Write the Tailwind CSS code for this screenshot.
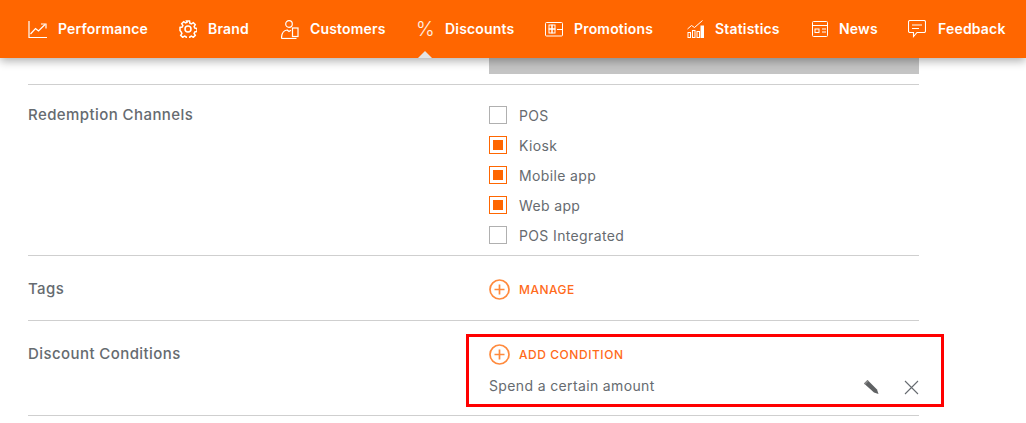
<!DOCTYPE html>
<html lang="en">
<head>
    <meta charset="UTF-8">
    <title>Discounts</title>
    <script src="https://cdn.jsdelivr.net/npm/@tailwindcss/browser@4"></script>
</head>
<body class="bg-white font-['Inter',sans-serif] text-[#666b70] overflow-hidden">
    <div class="relative w-[1026px] h-[423px] overflow-hidden">
      <nav class="relative z-10 h-[58px] bg-[#ff6600] shadow-[0_3px_9px_rgba(0,0,0,0.32)] flex items-center text-white text-[14px] font-semibold tracking-[0.18px]">
        <a class="absolute left-[28px] top-[18px] flex items-center gap-[11px]">
          <svg class="w-[19px] h-[17px]" viewBox="0 0 19 17" fill="none" stroke="white" stroke-width="1.200"><path d="M1 0v16.500h18"/><path d="M2.500 13l5-5.500 3 2.500 6.500-6.500"/><path d="M13 3h5v4.500"/></svg>
          <span class="leading-[22px]">Performance</span>
        </a>
        <a class="absolute left-[179px] top-[18px] flex items-center gap-[11px]">
          <svg class="w-[18px] h-[18px]" viewBox="0 0 18 18" fill="none" stroke="white" stroke-width="1.500"><circle cx="9" cy="9" r="3"/><path d="M7.500 1h3l.4 2.200 1.500.7 1.900-1.200 2 2-1.200 1.900.7 1.500 2.200.4v3l-2.200.4-.7 1.500 1.200 1.900-2 2-1.900-1.200-1.500.7-.4 2.200h-3l-.4-2.200-1.500-.7-1.900 1.200-2-2 1.200-1.900-.7-1.500L1 10.500v-3l2.200-.4.700-1.500L2.700 3.700l2-2 1.900 1.200 1.500-.7z"/></svg>
          <span class="leading-[22px]">Brand</span>
        </a>
        <a class="absolute left-[281px] top-[18px] flex items-center gap-[11px]">
          <svg class="w-[18px] h-[19px]" viewBox="0 0 18 19" fill="none" stroke="white" stroke-width="1.200"><circle cx="8" cy="4" r="3.300"/><path d="M.5 18.500c0-5 2-8 5.500-8.500l2 1.500 2-1.200"/><path d="M.5 18.500h15"/><rect x="11.500" y="8" width="5.500" height="8.500"/></svg>
          <span class="leading-[22px]">Customers</span>
        </a>
        <a class="absolute left-[416px] top-[18px] flex items-center gap-[12px]">
          <span class="w-[17px] text-[20px] font-light leading-[22px] tracking-normal text-white/90">%</span>
          <span class="leading-[22px]">Discounts</span>
        </a>
        <a class="absolute left-[545px] top-[18px] flex items-center gap-[11px]">
          <svg class="w-[18px] h-[15px]" viewBox="0 0 18 15" fill="none" stroke="white" stroke-width="1"><rect x=".5" y=".5" width="17" height="13.500" rx="1"/><path d="M12 7.500h5"/><rect x="4" y="3" width="3" height="4"/><rect x="7" y="3" width="3" height="4"/><rect x="4" y="7" width="3" height="4"/><rect x="7" y="7" width="3" height="4"/></svg>
          <span class="leading-[22px]">Promotions</span>
        </a>
        <a class="absolute left-[687px] top-[18px] flex items-center gap-[11px]">
          <svg class="w-[17px] h-[18px]" viewBox="0 0 17 18" fill="none" stroke="white" stroke-width="1"><path d="M.5 9l4-3.500 3 2L15.500.5"/><rect x="1" y="12.500" width="2.500" height="5"/><rect x="5.500" y="10.500" width="2.500" height="7"/><rect x="10" y="11.500" width="2.500" height="6"/><rect x="14" y="6" width="2.500" height="11.500" fill="white"/></svg>
          <span class="leading-[22px]">Statistics</span>
        </a>
        <a class="absolute left-[812px] top-[18px] flex items-center gap-[11px]">
          <svg class="w-[16px] h-[16px]" viewBox="0 0 16 16" fill="none" stroke="white" stroke-width="1"><rect x=".5" y=".5" width="15" height="15" rx="1"/><path d="M1 4.500h14M10 8h4M10 11h4"/><rect x="3" y="8" width="4" height="3.500"/></svg>
          <span class="leading-[22px]">News</span>
        </a>
        <a class="absolute left-[908px] top-[18px] flex items-center gap-[12px]">
          <svg class="w-[18px] h-[18px]" viewBox="0 0 18 18" fill="none" stroke="white" stroke-width="1.100"><path d="M2 .5h14a1.500 1.500 0 0 1 1.500 1.500v9a1.500 1.500 0 0 1-1.500 1.500H9l-3.500 4v-4H2A1.500 1.500 0 0 1 .5 11V2A1.500 1.500 0 0 1 2 .5z"/><path d="M4 5h10M4 8.500h7"/></svg>
          <span class="leading-[22px]">Feedback</span>
        </a>
        <!-- active tab notch -->
        <div class="absolute left-[418px] top-[51px] w-0 h-0 border-x-[7px] border-x-transparent border-b-[7px] border-b-[#e4e4e4]"></div>
      </nav>

      <main class="w-[919px] pl-[28px] text-[14px] font-normal tracking-[0.36px]">
        <div class="h-[26.500px] border-b border-[#cfcfcf] flex">
          <div class="w-[461px]"></div>
          <div class="w-[430px] h-[16px] bg-[#c4c4c4]"></div>
        </div>
        <section class="h-[171px] border-b border-[#cfcfcf] flex">
          <h3 class="w-[461px] pt-[20px] text-[15px] font-medium leading-[20px] tracking-[0.42px]">Redemption Channels</h3>
          <div class="pt-[21px] flex flex-col gap-[12px]">
            <label class="flex items-center gap-[12px] h-[18px]"><span class="w-[18px] h-[18px] border border-[#b0b0b0]"></span><span class="pt-[2px]">POS</span></label>
            <label class="flex items-center gap-[12px] h-[18px]"><span class="w-[18px] h-[18px] border border-[#ff6600] flex items-center justify-center"><span class="w-[10px] h-[10px] bg-[#ff6600]"></span></span><span class="pt-[2px]">Kiosk</span></label>
            <label class="flex items-center gap-[12px] h-[18px]"><span class="w-[18px] h-[18px] border border-[#ff6600] flex items-center justify-center"><span class="w-[10px] h-[10px] bg-[#ff6600]"></span></span><span class="pt-[2px]">Mobile app</span></label>
            <label class="flex items-center gap-[12px] h-[18px]"><span class="w-[18px] h-[18px] border border-[#ff6600] flex items-center justify-center"><span class="w-[10px] h-[10px] bg-[#ff6600]"></span></span><span class="pt-[2px]">Web app</span></label>
            <label class="flex items-center gap-[12px] h-[18px]"><span class="w-[18px] h-[18px] border border-[#b0b0b0]"></span><span class="pt-[2px]">POS Integrated</span></label>
          </div>
        </section>
        <section class="h-[65px] border-b border-[#cfcfcf] flex">
          <h3 class="w-[461px] pt-[23px] text-[15px] font-medium leading-[20px] tracking-[0.42px]">Tags</h3>
          <div class="pt-[24px] flex items-start gap-[9px] text-[#ff6a1a] text-[12px] font-medium tracking-[0.5px]">
            <svg class="w-[21px] h-[21px] -mt-[1px]" viewBox="0 0 21 21" fill="none" stroke="#ff8a3d" stroke-width="1.700"><circle cx="10.500" cy="10.500" r="9.500"/><path d="M5.500 10.500h10M10.500 5.500v10"/></svg>
            <span class="leading-[20px]">MANAGE</span>
          </div>
        </section>
        <section class="h-[95px] border-b border-[#cfcfcf] flex">
          <h3 class="w-[461px] pt-[23px] text-[15px] font-medium leading-[20px] tracking-[0.42px]">Discount Conditions</h3>
          <div class="w-[430px] pt-[24px]">
            <div class="flex items-start gap-[9px] text-[#ff6a1a] text-[12px] font-medium tracking-[0.55px]">
              <svg class="w-[21px] h-[21px] -mt-[1px]" viewBox="0 0 21 21" fill="none" stroke="#ff8a3d" stroke-width="1.700"><circle cx="10.500" cy="10.500" r="9.500"/><path d="M5.500 10.500h10M10.500 5.500v10"/></svg>
              <span class="leading-[20px]">ADD CONDITION</span>
            </div>
            <div class="mt-[11px] flex items-center h-[20px]">
              <span class="flex-1">Spend a certain amount</span>
              <svg class="w-[15px] h-[15px] mr-[25px] mt-[4px]" viewBox="0 0 15 15"><path d="M0 3.500L3.500 0 13 9.500l1.500 4.500-4.500-1.500z" fill="#5f6163"/><path d="M0 3.500L3.500 0l1.200 1.200-3.500 3.500z" fill="#8a8a8a"/></svg>
              <svg class="w-[15px] h-[15px] mt-[4px]" viewBox="0 0 15 15" fill="none" stroke="#666b70" stroke-width="1.100"><path d="M1 1l13 13M14 1L1 14"/></svg>
            </div>
          </div>
        </section>
      </main>

      <!-- red annotation box from the screenshot -->
      <div class="absolute left-[466px] top-[334px] w-[478px] h-[73px] border-[3px] border-[#ff0000]"></div>
    </div>
</body>
</html>
